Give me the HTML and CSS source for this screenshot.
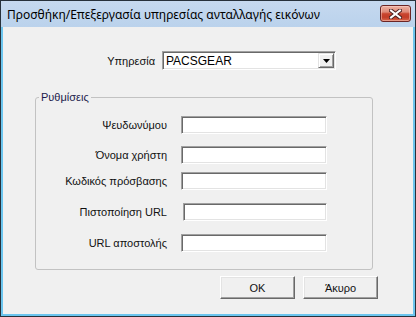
FILE: index.html
```html
<!DOCTYPE html>
<html lang="el">
<head>
    <meta charset="UTF-8">
    <title>Προσθήκη/Επεξεργασία υπηρεσίας ανταλλαγής εικόνων</title>
    <link rel="stylesheet" href="styles.css">
</head>
<body>
    <div class="window">
        <!-- Title bar -->
        <div class="titlebar">
            <span class="title">Προσθήκη/Επεξεργασία υπηρεσίας ανταλλαγής εικόνων</span>
            <button class="close" aria-label="Close">
                <svg width="13" height="10" viewBox="0 0 13 10">
                    <path d="M2 1.5 L11 8.5 M11 1.5 L2 8.5" stroke="#4a2020" stroke-width="4" stroke-linecap="square"/>
                    <path d="M2 1.5 L11 8.5 M11 1.5 L2 8.5" stroke="#fff" stroke-width="2" stroke-linecap="square"/>
                </svg>
            </button>
        </div>

        <!-- Dialog body -->
        <div class="client">
            <div class="service">
                <span class="service-label">Υπηρεσία</span>
                <div class="combo">
                    <span class="combo-text">PACSGEAR</span>
                    <span class="drop">
                        <svg width="7" height="4" viewBox="0 0 7 4"><path d="M0 0 H7 L3.5 4 Z" fill="#000"/></svg>
                    </span>
                </div>
            </div>

            <fieldset class="group">
                <legend>Ρυθμίσεις</legend>
                <div class="field first">
                    <label>Ψευδωνύμου</label>
                    <input class="textbox" type="text">
                </div>
                <div class="field">
                    <label>Όνομα χρήστη</label>
                    <input class="textbox" type="text">
                </div>
                <div class="field tight">
                    <label>Κωδικός πρόσβασης</label>
                    <input class="textbox" type="text">
                </div>
                <div class="field loose">
                    <label>Πιστοποίηση URL</label>
                    <input class="textbox shifted" type="text">
                </div>
                <div class="field loose">
                    <label>URL αποστολής</label>
                    <input class="textbox" type="text">
                </div>
            </fieldset>

            <div class="actions">
                <button class="button">OK</button>
                <button class="button">Άκυρο</button>
            </div>
        </div>
    </div>
</body>
</html>
```

FILE: styles.css
```css
body {
    margin: 0;
    font-family: "Liberation Sans", Arial, sans-serif;
    font-size: 11px;
    color: #111;
}

.window {
    width: 416px;
    height: 317px;
    box-sizing: border-box;
    border: 1px solid #27313b;
    background-color: #6cc5ee;
    display: flex;
    flex-direction: column;
    padding: 0 2px 2px;
}

/* Title bar */
.titlebar {
    height: 26px;
    margin: 0 -2px;
    padding: 0 4px 0 6px;
    background: linear-gradient(#c6d9ef, #bad2ec);
    display: flex;
    justify-content: space-between;
    align-items: flex-start;
    flex-shrink: 0;
}

.title {
    font-family: "Noto Sans", "Liberation Sans", sans-serif;
    font-size: 12px;
    line-height: 16px;
    margin-top: 6px;
    color: #000;
}

.close {
    width: 31px;
    height: 17px;
    margin-top: 4px;
    padding: 0;
    border: 1px solid #6b2525;
    border-radius: 3px;
    background: linear-gradient(#eeb2a4 0%, #de8a78 40%, #c9452f 52%, #c23d28 75%, #d9684d 100%);
    box-shadow: inset 0 0 0 1px rgba(255, 220, 210, 0.45);
    display: flex;
    align-items: center;
    justify-content: center;
}

/* Client area */
.client {
    flex: 1;
    background-color: #f0f0f0;
    display: flex;
    flex-direction: column;
    padding: 24px 0 0 32px;
}

.service {
    display: flex;
    align-items: center;
}

.service-label {
    width: 120px;
    text-align: right;
    margin-right: 7px;
}

.combo {
    width: 174px;
    height: 19px;
    box-sizing: border-box;
    background-color: #fff;
    border: 1px solid;
    border-color: #a0a0a0 #fff #fff #a0a0a0;
    box-shadow: inset 1px 1px 0 #696969, inset -1px -1px 0 #e3e3e3;
    display: flex;
    align-items: center;
}

.combo-text {
    font-size: 12px;
    padding-left: 3px;
    color: #000;
}

.drop {
    margin-left: auto;
    margin-right: 1px;
    width: 16px;
    height: 15px;
    box-sizing: border-box;
    background-color: #f0f0f0;
    border: 1px solid;
    border-color: #e3e3e3 #696969 #696969 #e3e3e3;
    box-shadow: inset 1px 1px 0 #fff, inset -1px -1px 0 #a0a0a0;
    display: flex;
    align-items: center;
    justify-content: center;
}

/* Group box */
.group {
    margin: 21px 0 0;
    padding: 0;
    min-width: 0;
    width: 338px;
    height: 179px;
    box-sizing: border-box;
    border: 1px solid #c2c2c2;
    border-radius: 3px;
}

.group legend {
    margin-left: 3px;
    padding: 0 2px;
    color: #1c1c4c;
}

.field {
    display: flex;
    align-items: center;
    margin-top: 12px;
}

.field.first {
    margin-top: 13px;
}

.field.tight {
    margin-top: 8px;
}

.field.loose {
    margin-top: 13px;
}

.field label {
    width: 131px;
    text-align: right;
    margin-right: 14px;
}

.textbox {
    width: 146px;
    height: 18px;
    box-sizing: border-box;
    margin: 0;
    padding: 0 2px;
    background-color: #fff;
    border: 1px solid;
    border-color: #a0a0a0 #fff #fff #a0a0a0;
    box-shadow: inset 1px 1px 0 #696969, inset -1px -1px 0 #e3e3e3;
    outline: none;
}

.textbox.shifted {
    width: 144px;
    margin-left: 2px;
}

/* Bottom buttons */
.actions {
    display: flex;
    gap: 8px;
    margin-top: 6px;
    padding-left: 185px;
}

.button {
    width: 75px;
    height: 23px;
    padding: 0;
    font-family: "Liberation Sans", Arial, sans-serif;
    font-size: 11px;
    color: #111;
    background-color: #f0f0f0;
    border: 1px solid;
    border-color: #fff #696969 #696969 #fff;
    box-shadow: inset -1px -1px 0 #a0a0a0, inset 1px 1px 0 #e3e3e3;
}
```
